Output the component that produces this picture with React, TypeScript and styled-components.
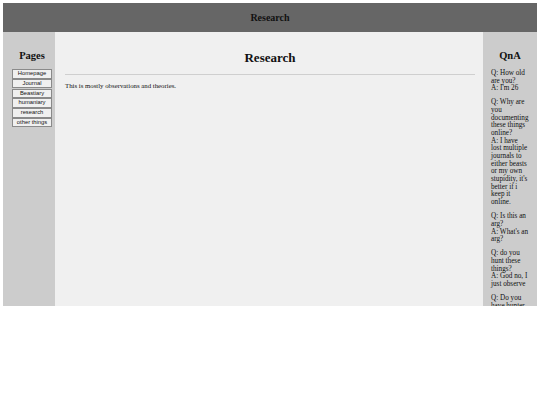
import React from "react";
import styled, { createGlobalStyle } from "styled-components";

const GlobalStyle = createGlobalStyle`
  body {
    margin: 3px;
    background: #ffffff;
    font-family: "Liberation Serif", "Times New Roman", serif;
  }
`;

const Page = styled.div`
  display: flex;
  flex-direction: column;
  height: 303px;
  overflow: hidden;
`;

const Header = styled.header`
  height: 29px;
  background: #666666;
  display: flex;
  align-items: center;
  justify-content: center;
  font-weight: bold;
  font-size: 10px;
  color: #111111;
`;

const Columns = styled.div`
  flex: 1;
  display: grid;
  grid-template-columns: 52px 1fr 54px;
  min-height: 0;
`;

const Sidebar = styled.aside<{ $left?: boolean }>`
  background: #cccccc;
  overflow: hidden;
  padding: ${(p) => (p.$left ? "0 3px 0 9px" : "0 8px 0 8px")};
`;

const SideTitle = styled.h2<{ $gap?: number }>`
  margin: 18px 0 ${(p) => p.$gap ?? 8}px;
  font-size: 10.5px;
  text-align: center;
  color: #111111;
`;

const NavList = styled.nav`
  display: flex;
  flex-direction: column;
`;

const NavButton = styled.a`
  display: block;
  height: 7.5px;
  line-height: 7.5px;
  margin-bottom: 0.3px;
  background: #f0f0f0;
  border: 0.5px solid #8a8a8a;
  font-family: "Liberation Sans", Arial, sans-serif;
  font-size: 5.8px;
  text-align: center;
  color: #111111;
  text-decoration: none;
`;

const Main = styled.main`
  background: #f0f0f0;
  padding: 0 8px 0 10px;
`;

const MainTitle = styled.h1`
  margin: 18px 0 8px;
  font-size: 13px;
  text-align: center;
  color: #111111;
`;

const Rule = styled.hr`
  border: none;
  border-top: 1px solid #cfcfcf;
  margin: 0 0 7px;
`;

const BodyText = styled.p`
  margin: 0;
  font-size: 6.8px;
  color: #111111;
`;

const Qa = styled.p`
  margin: 0 0 6.4px;
  font-size: 7.2px;
  line-height: 7.67px;
  color: #111111;
`;

const qna: [string, string][] = [
  ["How old are you?", "I'm 26"],
  [
    "Why are you documenting these things online?",
    "I have lost multiple journals to either beasts or my own stupidity, it's better if i keep it online.",
  ],
  ["Is this an arg?", "What's an arg?"],
  ["do you hunt these things?", "God no, I just observe"],
  ["Do you have hunter friends?", "No."],
];

const pages = ["Homepage", "Journal", "Beastiary", "humaniary", "research", "other things"];

export default function App() {
  return (
    <>
      <GlobalStyle />
      <Page>
        <Header>Research</Header>
        <Columns>
          <Sidebar $left>
            <SideTitle>Pages</SideTitle>
            <NavList>
              {pages.map((p) => (
                <NavButton key={p} href="#">
                  {p}
                </NavButton>
              ))}
            </NavList>
          </Sidebar>
          <Main>
            <MainTitle>Research</MainTitle>
            <Rule />
            <BodyText>This is mostly observations and theories.</BodyText>
          </Main>
          <Sidebar>
            <SideTitle $gap={9}>QnA</SideTitle>
            {qna.map(([q, a]) => (
              <Qa key={q}>
                Q: {q}
                <br />
                A: {a}
              </Qa>
            ))}
          </Sidebar>
        </Columns>
      </Page>
    </>
  );
}
